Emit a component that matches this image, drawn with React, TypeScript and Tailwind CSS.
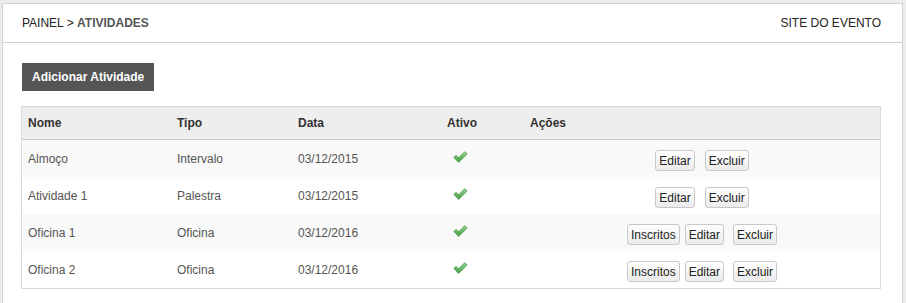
import React from "react";

interface Atividade {
  nome: string;
  tipo: string;
  data: string;
  inscritos: boolean;
}

const atividades: Atividade[] = [
  { nome: "Almoço", tipo: "Intervalo", data: "03/12/2015", inscritos: false },
  { nome: "Atividade 1", tipo: "Palestra", data: "03/12/2015", inscritos: false },
  { nome: "Oficina 1", tipo: "Oficina", data: "03/12/2016", inscritos: true },
  { nome: "Oficina 2", tipo: "Oficina", data: "03/12/2016", inscritos: true },
];

const cols = "grid grid-cols-[149px_121px_149px_83px_1fr]";

function Check() {
  return (
    <svg width="15" height="12" viewBox="0 0 15 12">
      <defs>
        <linearGradient id="chk" x1="0" y1="0" x2="0" y2="1">
          <stop offset="0" stopColor="#9ad894" />
          <stop offset="1" stopColor="#3f9e3c" />
        </linearGradient>
      </defs>
      <path
        d="M0.8 6.4 L3 4.2 L5.6 6.8 L11.8 0.6 L14.2 3 L5.6 11.4 Z"
        fill="url(#chk)"
        stroke="#4f8f4a"
        strokeWidth="0.7"
        strokeLinejoin="round"
      />
    </svg>
  );
}

function Btn({ label, className = "" }: { label: string; className?: string }) {
  return (
    <button
      className={`h-[21px] px-[3px] text-[12px] leading-none text-[#222] border border-[#c8c8c8] rounded-[3px] bg-gradient-to-b from-white to-[#ebebeb] ${className}`}
    >
      {label}
    </button>
  );
}

export default function App() {
  return (
    <div
      className="min-h-screen w-full bg-[#ececec] pt-[3px] pl-[2px]"
      style={{ fontFamily: '"Liberation Sans", Arial, sans-serif' }}
    >
      <div className="w-[901px] min-h-[300px] bg-white border border-[#d4d4d4] border-b-0">
        <div className="flex items-center justify-between h-[39px] border-b border-[#cfcfcf] pl-[19px] pr-[21px] text-[12px] text-[#222]">
          <p>
            PAINEL &gt; <span className="font-bold text-[#555]">ATIVIDADES</span>
          </p>
          <p>SITE DO EVENTO</p>
        </div>

        <div className="pl-[18px] pr-[21px] pt-[20px]">
          <button className="ml-px h-[28px] px-[10px] bg-[#555555] text-white text-[12px] font-bold">
            Adicionar Atividade
          </button>

          <div className="mt-[15px] border border-[#d9d9d9] text-[12px]">
            <div className={`${cols} h-[33px] items-center bg-[#eeeeee] border-b border-[#cccccc] font-bold text-[#333]`}>
              <div className="pl-[6px]">Nome</div>
              <div className="pl-[6px]">Tipo</div>
              <div className="pl-[6px]">Data</div>
              <div className="pl-[6px]">Ativo</div>
              <div className="pl-[6px]">Ações</div>
            </div>

            {atividades.map((a, i) => (
              <div
                key={a.nome}
                className={`${cols} h-[37px] text-[#555] ${i % 2 === 0 ? "bg-[#f9f9f9]" : "bg-white"}`}
              >
                <div className="pl-[6px] flex items-center">{a.nome}</div>
                <div className="pl-[6px] flex items-center">{a.tipo}</div>
                <div className="pl-[6px] flex items-center">{a.data}</div>
                <div className="pl-[12px] pt-[11px]">
                  <Check />
                </div>
                <div className="flex justify-center items-start pt-[10px]">
                  {a.inscritos && <Btn label="Inscritos" className="mr-[5px]" />}
                  <Btn label="Editar" className={a.inscritos ? "mr-[9px]" : "mr-[10px]"} />
                  <Btn label="Excluir" />
                </div>
              </div>
            ))}
          </div>
        </div>
      </div>
    </div>
  );
}
